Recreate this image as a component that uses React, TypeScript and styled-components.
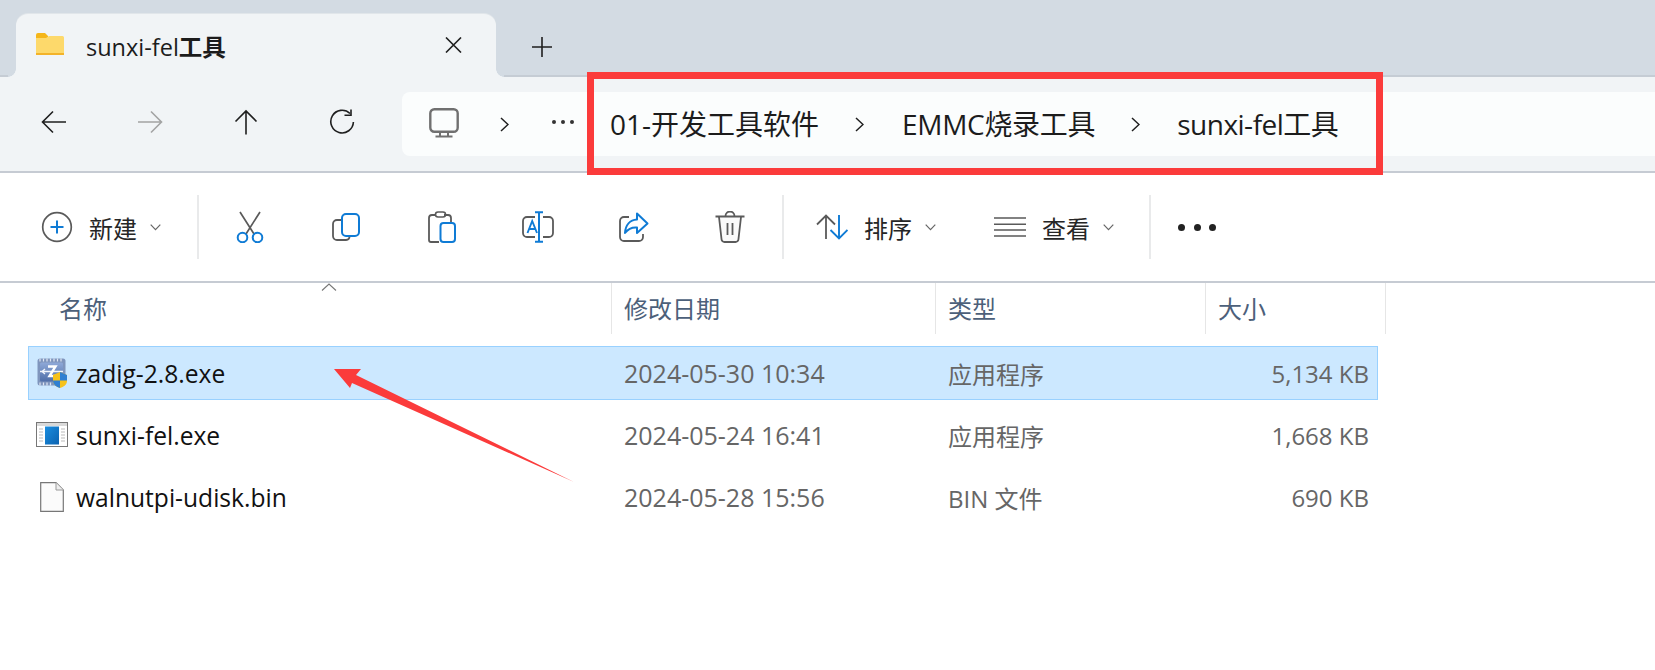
import { FC } from "react";
import styled, { createGlobalStyle } from "styled-components";

const FONT = `"Open Sans", "Noto Sans CJK SC", sans-serif`;
const BLUE = "#0f7bd5";
const GRAY = "#5a5a5a";

interface FileRow {
  name: string;
  date: string;
  type: string;
  size: string;
  icon: "zadig" | "exe" | "file";
  selected?: boolean;
}

const files: FileRow[] = [
  { name: "zadig-2.8.exe", date: "2024-05-30 10:34", type: "应用程序", size: "5,134 KB", icon: "zadig", selected: true },
  { name: "sunxi-fel.exe", date: "2024-05-24 16:41", type: "应用程序", size: "1,668 KB", icon: "exe" },
  { name: "walnutpi-udisk.bin", date: "2024-05-28 15:56", type: "BIN 文件", size: "690 KB", icon: "file" },
];

const FolderIcon = () => (
  <svg width="28" height="22" viewBox="0 0 28 22">
    <path d="M0 2 a2 2 0 0 1 2-2 h7 l3 3 v3 H0z" fill="#f5b619" />
    <path d="M0 5 h10 l3-2 h13.5 a1.5 1.5 0 0 1 1.5 1.5 V20.5 a1.5 1.5 0 0 1-1.5 1.5 H1.5 A1.5 1.5 0 0 1 0 20.5z" fill="#fdd96b" />
    <rect x="0" y="20" width="28" height="2" fill="#f3b32a" />
  </svg>
);

const line = { fill: "none", stroke: "#1f1f1f", strokeWidth: 1.6 };

const BackIcon: FC<{ color?: string; flip?: boolean }> = ({ color = "#1f1f1f", flip }) => (
  <svg width="26" height="24" viewBox="0 0 26 24" style={flip ? { transform: "scaleX(-1)" } : undefined}>
    <path d="M25 12 H2 M12 1.5 L1.5 12 L12 22.5" fill="none" stroke={color} strokeWidth="1.6" />
  </svg>
);

const UpIcon = () => (
  <svg width="24" height="26" viewBox="0 0 24 26">
    <path d="M12 25.5 V2 M1.5 12.5 L12 2 L22.5 12.5" {...line} />
  </svg>
);

const RefreshIcon = () => (
  <svg width="26" height="26" viewBox="0 0 26 26">
    <path d="M21 4.5 A11.3 11.3 0 1 0 24.4 13" {...line} />
    <path d="M22 0.5 V6.3 H15.5" {...line} />
  </svg>
);

const MonitorIcon = () => (
  <svg width="30" height="30" viewBox="0 0 30 30">
    <rect x="1.3" y="1.3" width="27.4" height="22.4" rx="4" fill="none" stroke="#707070" strokeWidth="2.4" />
    <path d="M11 24 v4 M19 24 v4 M6.5 28.6 H23.5" fill="none" stroke="#707070" strokeWidth="2" />
  </svg>
);

const Chevron: FC<{ size?: number }> = ({ size = 15 }) => (
  <svg width={size * 0.6} height={size} viewBox="0 0 9 15">
    <path d="M1 1 L8 7.5 L1 14" fill="none" stroke="#1f1f1f" strokeWidth="1.5" />
  </svg>
);

const DownCaret = () => (
  <svg width="11" height="7" viewBox="0 0 11 7">
    <path d="M0.7 0.7 L5.5 5.7 L10.3 0.7" fill="none" stroke="#666" strokeWidth="1.2" />
  </svg>
);

const NewIcon = () => (
  <svg width="32" height="32" viewBox="0 0 32 32">
    <circle cx="16" cy="16" r="14.3" fill="none" stroke={GRAY} strokeWidth="1.7" />
    <path d="M16 9.5 V22.5 M9.5 16 H22.5" fill="none" stroke={BLUE} strokeWidth="2" />
  </svg>
);

const ScissorsIcon = () => (
  <svg width="28" height="32" viewBox="0 0 28 32">
    <path d="M4 1 L18 23 M24 1 L10 23" fill="none" stroke={GRAY} strokeWidth="1.7" />
    <circle cx="6.5" cy="26.5" r="4.8" fill="none" stroke={BLUE} strokeWidth="2" />
    <circle cx="21.5" cy="26.5" r="4.8" fill="none" stroke={BLUE} strokeWidth="2" />
  </svg>
);

const CopyIcon = () => (
  <svg width="28" height="28" viewBox="0 0 28 28">
    <path d="M9 7 H5 a4 4 0 0 0-4 4 V23 a4 4 0 0 0 4 4 H14 a4 4 0 0 0 3.6-4" fill="none" stroke={GRAY} strokeWidth="1.8" />
    <rect x="10" y="1" width="17" height="22" rx="4" fill="none" stroke={BLUE} strokeWidth="2" />
  </svg>
);

const PasteIcon = () => (
  <svg width="28" height="32" viewBox="0 0 28 32">
    <path d="M1 29 V7 a3 3 0 0 1 3-3 H8 M16 4 H20 a3 3 0 0 1 3 3 V11 M1 29 a2 2 0 0 0 2 2 H11" fill="none" stroke={GRAY} strokeWidth="1.8" />
    <rect x="7.5" y="1" width="10" height="5" rx="2.5" fill="none" stroke={GRAY} strokeWidth="1.6" />
    <rect x="12.5" y="12" width="14.5" height="19" rx="3" fill="none" stroke={BLUE} strokeWidth="2" />
  </svg>
);

const RenameIcon = () => (
  <svg width="32" height="32" viewBox="0 0 32 32">
    <path d="M13 6 H5 a4 4 0 0 0-4 4 V22 a4 4 0 0 0 4 4 H13 M21 6 H27 a4 4 0 0 1 4 4 V22 a4 4 0 0 1-4 4 H21" fill="none" stroke={GRAY} strokeWidth="1.8" />
    <path d="M17 1 V31 M13 1.2 H21 M13 30.8 H21" fill="none" stroke={BLUE} strokeWidth="2" />
    <path d="M5.5 22 L10.2 10 L15 22 M7.2 18 H13.3" fill="none" stroke={BLUE} strokeWidth="1.9" />
  </svg>
);

const ShareIcon = () => (
  <svg width="30" height="30" viewBox="0 0 30 30">
    <path d="M10 5 H5 a4 4 0 0 0-4 4 V25 a4 4 0 0 0 4 4 H20 a4 4 0 0 0 4-4 V22" fill="none" stroke={GRAY} strokeWidth="1.8" />
    <path d="M18 1.5 L28.5 11.5 L18 21 V15.5 C12 15 9 17 6 21 C6.5 13 11 8 18 7.5Z" fill="#fff" stroke={BLUE} strokeWidth="2" strokeLinejoin="round" />
  </svg>
);

const TrashIcon = () => (
  <svg width="30" height="32" viewBox="0 0 30 32">
    <path d="M4 6 L6.5 28 a3 3 0 0 0 3 3 H20.5 a3 3 0 0 0 3-3 L26 6" fill="#fafafa" stroke={GRAY} strokeWidth="1.8" />
    <path d="M0.5 5.5 H29.5 M10.5 5 a4.5 4.5 0 0 1 9 0 M12.5 12 V24 M17.5 12 V24" fill="none" stroke={GRAY} strokeWidth="1.8" />
  </svg>
);

const SortIcon = () => (
  <svg width="32" height="26" viewBox="0 0 32 26">
    <path d="M10 25 V1.5 M1 10.5 L10 1.5 L19 10.5" fill="none" stroke={GRAY} strokeWidth="1.8" />
    <path d="M23 1 V24.5 M14.5 16 L23 24.5 L31.5 16" fill="none" stroke={BLUE} strokeWidth="1.9" />
  </svg>
);

const ViewIcon = () => (
  <svg width="32" height="20" viewBox="0 0 32 20">
    <path d="M0 1 H32 M0 7.3 H32 M0 13 H32 M0 19 H32" fill="none" stroke={GRAY} strokeWidth="1.6" />
  </svg>
);

const ZadigIcon = () => (
  <svg width="30" height="30" viewBox="0 0 30 30">
    <defs>
      <linearGradient id="zchip" x1="0" y1="0" x2="0" y2="1">
        <stop offset="0" stopColor="#8fa9d8" />
        <stop offset="1" stopColor="#4f6ea8" />
      </linearGradient>
    </defs>
    <rect x="0.5" y="0.5" width="28" height="27" rx="2.5" fill="#7f95bd" />
    <path d="M3 0.5v3M6.5 0.5v3M10 0.5v3M13.5 0.5v3M17 0.5v3M20.5 0.5v3M24 0.5v3M3 24.5v3M6.5 24.5v3M10 24.5v3M13.5 24.5v3" stroke="#dfe6f2" strokeWidth="1.2" />
    <rect x="3" y="4.5" width="23" height="19" rx="1.5" fill="url(#zchip)" />
    <path d="M3 13.5 H26 M5 13.5 l3-2.5 M5 13.5 l3 2.5" stroke="#f2f5fb" strokeWidth="1.3" fill="none" />
    <path d="M11 8.5 H18.5 L12.5 18 H19.5" stroke="#fff" strokeWidth="2.4" fill="none" />
    <path d="M16 17 L23 14 L30 17 V23 C30 26.5 26.5 29 23 30 C19.5 29 16 26.5 16 23Z" fill="#f6c21c" />
    <path d="M23 14 L30 17 V22.5 H23Z M16 22.5 H23 V30 C19.5 29 16 26.5 16 22.5Z" fill="#2f7fd1" />
  </svg>
);

const ExeIcon = () => (
  <svg width="32" height="26" viewBox="0 0 32 26">
    <defs>
      <linearGradient id="exeblue" x1="0" y1="0" x2="1" y2="1">
        <stop offset="0" stopColor="#1b8ee0" />
        <stop offset="1" stopColor="#0b62b0" />
      </linearGradient>
    </defs>
    <rect x="0.5" y="0.5" width="31" height="24" fill="#fff" stroke="#777" />
    <rect x="1" y="1" width="30" height="3" fill="#d9d9d9" />
    <rect x="9" y="4.5" width="14" height="18" fill="url(#exeblue)" />
    <path d="M3 7H7M3 10H7M3 13H7M3 16H7M3 19H7M25 7H29M25 10H29M25 13H29M25 16H29M25 19H29" stroke="#bbb" strokeWidth="1" />
  </svg>
);

const FileIcon = () => (
  <svg width="24" height="30" viewBox="0 0 24 30">
    <path d="M0.7 0.7 H16 L23.3 8 V29.3 H0.7Z" fill="#fbfbfb" stroke="#777" strokeWidth="1.2" />
    <path d="M16 0.7 V8 H23.3" fill="#eee" stroke="#999" strokeWidth="1" />
  </svg>
);

const rowIcons = { zadig: <ZadigIcon />, exe: <ExeIcon />, file: <FileIcon /> };

const App = () => {
  return (
    <Page>
      <GlobalStyle />
      <TabStrip>
        <Tab>
          <TabFolder><FolderIcon /></TabFolder>
          <TabTitle>sunxi-fel<TabTitleCjk>工具</TabTitleCjk></TabTitle>
          <TabClose>
            <svg width="17" height="16" viewBox="0 0 17 16">
              <path d="M1 0.5 L16 15.5 M16 0.5 L1 15.5" {...line} />
            </svg>
          </TabClose>
        </Tab>
        <NewTab>
          <svg width="20" height="20" viewBox="0 0 20 20">
            <path d="M10 0 V20 M0 10 H20" {...line} />
          </svg>
        </NewTab>
      </TabStrip>

      <NavBar>
        <NavButtons>
          <NavButton><BackIcon /></NavButton>
          <NavButton><BackIcon color="#a3a3a3" flip /></NavButton>
          <NavButton><UpIcon /></NavButton>
          <NavButton><RefreshIcon /></NavButton>
        </NavButtons>
        <AddressBox>
          <MonitorIcon />
          <CrumbChevron $left={41}><Chevron /></CrumbChevron>
          <CrumbDots $left={43}>
            <span /><span /><span />
          </CrumbDots>
          <Crumb $left={36}>01-开发工具软件</Crumb>
          <CrumbChevron $left={36}><Chevron /></CrumbChevron>
          <Crumb $left={38} $spacing={-0.3}>EMMC烧录工具</Crumb>
          <CrumbChevron $left={36}><Chevron /></CrumbChevron>
          <Crumb $left={37} $spacing={-0.5}>sunxi-fel工具</Crumb>
        </AddressBox>
      </NavBar>

      <Toolbar>
        <TextTool $width={197} $pad={41}>
          <NewIcon />
          <ToolLabel>新建</ToolLabel>
          <DownCaret />
        </TextTool>
        <ToolDivider />
        <IconTools>
          <IconTool><ScissorsIcon /></IconTool>
          <IconTool><CopyIcon /></IconTool>
          <IconTool><PasteIcon /></IconTool>
          <IconTool><RenameIcon /></IconTool>
          <IconTool><ShareIcon /></IconTool>
          <IconTool><TrashIcon /></IconTool>
        </IconTools>
        <ToolDivider />
        <TextTool $width={190} $pad={32}>
          <SortIcon />
          <ToolLabel>排序</ToolLabel>
          <DownCaret />
        </TextTool>
        <TextTool $width={175} $pad={20}>
          <ViewIcon />
          <ToolLabel>查看</ToolLabel>
          <DownCaret />
        </TextTool>
        <ToolDivider />
        <MoreDots>
          <span /><span /><span />
        </MoreDots>
      </Toolbar>

      <HeaderRow>
        <HeaderCell>
          名称
          <SortCaret>
            <svg width="16" height="8" viewBox="0 0 16 8">
              <path d="M1 7.5 L8 1 L15 7.5" fill="none" stroke="#777" strokeWidth="1.1" />
            </svg>
          </SortCaret>
        </HeaderCell>
        <HeaderCell>修改日期</HeaderCell>
        <HeaderCell>类型</HeaderCell>
        <HeaderCell>大小</HeaderCell>
      </HeaderRow>

      <Rows>
        {files.map((file) => (
          <Row key={file.name} $selected={file.selected}>
            <NameCell>
              <RowIcon>{rowIcons[file.icon]}</RowIcon>
              {file.name}
            </NameCell>
            <DateCell>{file.date}</DateCell>
            <TypeCell>{file.type}</TypeCell>
            <SizeCell>{file.size}</SizeCell>
          </Row>
        ))}
      </Rows>

      {/* red markup drawn over the screenshot */}
      <RedFrame />
      <ArrowMark width="1655" height="670" viewBox="0 0 1655 670">
        <path d="M334 369 L361 369 L356 375 L574 482 L352 383 L350 388Z" fill="#fb3b3b" />
      </ArrowMark>
    </Page>
  );
};

export default App;

const GlobalStyle = createGlobalStyle`
  html, body {
    margin: 0;
    padding: 0;
    background: #fff;
    overflow: hidden;
  }
`;

const Page = styled.div`
  position: relative;
  width: 1655px;
  height: 670px;
  overflow: hidden;
  font-family: ${FONT};
  background: #fff;
`;

const TabStrip = styled.div`
  display: flex;
  align-items: flex-end;
  height: 77px;
  padding-left: 16px;
  box-sizing: border-box;
  background: #d3dbe3;
  box-shadow: inset 0 -2px 0 #c5ccd4;
`;

const Tab = styled.div`
  position: relative;
  display: flex;
  align-items: center;
  width: 480px;
  height: 63px;
  padding-left: 20px;
  box-sizing: border-box;
  background: #f1f4f6;
  border-radius: 12px 12px 0 0;
  box-shadow: 0 -1px 0 #e1e6ea;

  &::before,
  &::after {
    content: "";
    position: absolute;
    bottom: 0;
    width: 8px;
    height: 8px;
  }
  &::before {
    left: -8px;
    background: radial-gradient(circle at 0 0, #d3dbe3 7.5px, #f1f4f6 8px);
  }
  &::after {
    right: -8px;
    background: radial-gradient(circle at 100% 0, #d3dbe3 7.5px, #f1f4f6 8px);
  }
`;

const TabFolder = styled.span`
  display: flex;
  margin-bottom: 3px;
`;

const TabTitle = styled.span`
  margin-left: 22px;
  font-size: 23.5px;
  font-weight: 500;
  color: #1c1c1c;
  white-space: nowrap;
`;

const TabTitleCjk = styled.span`
  font-weight: 700;
`;

const TabClose = styled.span`
  display: flex;
  margin-left: auto;
  margin-right: 34px;
  margin-bottom: 2px;
`;

const NewTab = styled.span`
  display: flex;
  align-self: center;
  margin: 16px 0 0 36px;
`;

const NavBar = styled.div`
  display: flex;
  align-items: center;
  height: 96px;
  box-sizing: border-box;
  background: #f1f4f6;
  border-bottom: 2px solid #c6cbd3;
`;

const NavButtons = styled.div`
  display: flex;
  width: 402px;
  padding-left: 6px;
  margin-bottom: 4px;
  box-sizing: border-box;
`;

const NavButton = styled.div`
  display: flex;
  align-items: center;
  justify-content: center;
  width: 96px;
  height: 40px;
`;

const AddressBox = styled.div`
  display: flex;
  flex: 1;
  align-items: center;
  height: 64px;
  padding-left: 27px;
  background: #fbfdfd;
  border-radius: 8px 0 0 8px;

  & > svg {
    margin-bottom: 3px;
  }
`;

const CrumbChevron = styled.span<{ $left: number }>`
  display: flex;
  margin-left: ${({ $left }) => $left}px;
`;

const CrumbDots = styled.span<{ $left: number }>`
  display: flex;
  gap: 5px;
  margin-left: ${({ $left }) => $left}px;
  margin-bottom: 4px;

  & > span {
    width: 4px;
    height: 4px;
    border-radius: 50%;
    background: #333;
  }
`;

const Crumb = styled.span<{ $left: number; $spacing?: number }>`
  margin-left: ${({ $left }) => $left}px;
  margin-bottom: 2px;
  font-size: 28px;
  letter-spacing: ${({ $spacing }) => $spacing ?? 0}px;
  color: #1c1c1c;
  white-space: nowrap;
`;

const Toolbar = styled.div`
  display: flex;
  align-items: center;
  height: 110px;
  box-sizing: border-box;
  background: #fff;
  border-bottom: 2px solid #c6cbd3;
`;

const ToolDivider = styled.div`
  width: 2px;
  height: 64px;
  background: #e9eaeb;
`;

const TextTool = styled.div<{ $width: number; $pad: number }>`
  display: flex;
  align-items: center;
  width: ${({ $width }) => $width}px;
  padding-left: ${({ $pad }) => $pad}px;
  box-sizing: border-box;
  flex-shrink: 0;

  & > svg:last-child {
    margin-left: 13px;
  }
`;

const ToolLabel = styled.span`
  margin-left: 16px;
  font-size: 24px;
  color: #262626;
  white-space: nowrap;
`;

const IconTools = styled.div`
  display: flex;
  padding: 0 4px 0 3px;
`;

const IconTool = styled.div`
  display: flex;
  align-items: center;
  justify-content: center;
  width: 96px;
  height: 40px;
`;

const MoreDots = styled.div`
  display: flex;
  gap: 8.5px;
  margin-left: 27px;

  & > span {
    width: 7px;
    height: 7px;
    border-radius: 50%;
    background: #222;
  }
`;

const HeaderRow = styled.div`
  display: grid;
  grid-template-columns: 612px 324px 270px 180px;
  height: 51px;
`;

const HeaderCell = styled.div`
  position: relative;
  display: flex;
  align-items: center;
  padding: 0 0 2px 12px;
  box-sizing: border-box;
  font-size: 24px;
  color: #4c607a;
  border-right: 1px solid #e6e6e6;

  &:first-child {
    padding-left: 59px;
  }
`;

const SortCaret = styled.span`
  position: absolute;
  left: 321px;
  top: 0;
  display: flex;
`;

const Rows = styled.div`
  display: flex;
  flex-direction: column;
  gap: 8px;
  margin-top: 12px;
`;

const Row = styled.div<{ $selected?: boolean }>`
  display: grid;
  grid-template-columns: 584px 324px 270px 163px;
  align-items: center;
  width: 1350px;
  height: 54px;
  margin-left: 28px;
  box-sizing: border-box;
  background: ${({ $selected }) => ($selected ? "#cce8ff" : "transparent")};
  outline: ${({ $selected }) => ($selected ? "1px solid #99d1ff" : "none")};
  outline-offset: -1px;
`;

const NameCell = styled.div`
  display: flex;
  align-items: center;
  font-size: 24.6px;
  color: #111;
  white-space: nowrap;
`;

const RowIcon = styled.span`
  display: flex;
  justify-content: center;
  width: 32px;
  margin: 0 8px 0 8px;
`;

const DateCell = styled.div`
  padding-left: 12px;
  font-size: 25px;
  color: #666;
  white-space: nowrap;
`;

const TypeCell = styled(DateCell)`
  font-size: 24px;
`;

const SizeCell = styled.div`
  font-size: 24px;
  color: #666;
  text-align: right;
  white-space: nowrap;
`;

const RedFrame = styled.div`
  position: absolute;
  left: 587px;
  top: 72px;
  width: 796px;
  height: 103px;
  box-sizing: border-box;
  border: 7px solid #fb3b3b;
  pointer-events: none;
`;

const ArrowMark = styled.svg`
  position: absolute;
  left: 0;
  top: 0;
  pointer-events: none;
`;
